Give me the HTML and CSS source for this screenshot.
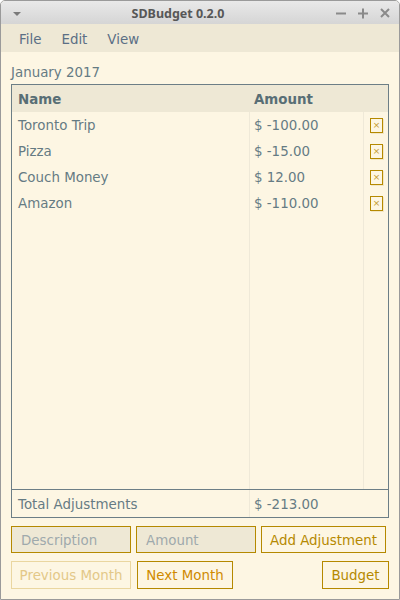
FILE: index.html
```html
<!DOCTYPE html>
<html>
<head>
<meta charset="utf-8">
<link rel="stylesheet" href="styles.css">
</head>
<body>
<div class="window">
  <div class="titlebar">
    <svg class="tb-menu" width="12" height="8" viewBox="0 0 12 8"><path d="M2 2 L10 2 L6 6 Z" fill="#7a7a7a"/></svg>
    <div class="title">SDBudget 0.2.0</div>
    <div class="tb-controls">
      <svg width="12" height="12" viewBox="0 0 12 12"><path d="M1 6.5 H11" stroke="#8a8a8a" stroke-width="2"/></svg>
      <svg width="12" height="12" viewBox="0 0 12 12"><path d="M1 6.5 H11 M6 1.5 V11.5" stroke="#8a8a8a" stroke-width="2"/></svg>
      <svg width="12" height="12" viewBox="0 0 12 12"><path d="M2 2 L10 10 M10 2 L2 10" stroke="#8a8a8a" stroke-width="2"/></svg>
    </div>
  </div>
  <div class="menubar">
    <span class="menu">File</span>
    <span class="menu">Edit</span>
    <span class="menu">View</span>
  </div>
  <div class="content">
    <div class="month">January 2017</div>
    <div class="table">
      <div class="thead">
        <div class="th c-name">Name</div>
        <div class="th c-amt">Amount</div>
        <div class="th c-del"></div>
      </div>
      <div class="tbody">
        <div class="col col-name">
          <div class="cell">Toronto Trip</div>
          <div class="cell">Pizza</div>
          <div class="cell">Couch Money</div>
          <div class="cell">Amazon</div>
        </div>
        <div class="col col-amt">
          <div class="cell">$ -100.00</div>
          <div class="cell">$ -15.00</div>
          <div class="cell">$ 12.00</div>
          <div class="cell">$ -110.00</div>
        </div>
        <div class="col col-del">
          <div class="cell"><span class="del">×</span></div>
          <div class="cell"><span class="del">×</span></div>
          <div class="cell"><span class="del">×</span></div>
          <div class="cell"><span class="del">×</span></div>
        </div>
      </div>
      <div class="tfoot">
        <div class="fcell c-name">Total Adjustments</div>
        <div class="fcell c-amt">$ -213.00</div>
        <div class="fcell c-del"></div>
      </div>
    </div>
    <div class="row row1">
      <div class="field">Description</div>
      <div class="field">Amount</div>
      <div class="btn btn-add">Add Adjustment</div>
    </div>
    <div class="row row2">
      <div class="btn btn-prev">Previous Month</div>
      <div class="btn btn-next">Next Month</div>
      <div class="spacer"></div>
      <div class="btn btn-budget">Budget</div>
    </div>
  </div>
</div>
</body>
</html>
```

FILE: styles.css
```css
* { box-sizing: border-box; }
html, body { margin: 0; padding: 0; background: #ffffff; }
body { width: 400px; height: 600px; font-family: "DejaVu Sans", sans-serif; }

.window {
  width: 400px;
  height: 600px;
  border: 1px solid #9a9a9a;
  border-radius: 5px 5px 0 0;
  overflow: hidden;
  display: flex;
  flex-direction: column;
  background: #fdf6e3;
}

.titlebar {
  height: 23px;
  background: linear-gradient(#e9e9e9, #d5d5d5);
  display: flex;
  align-items: center;
  position: relative;
  flex: none;
}
.tb-menu { position: absolute; left: 10px; top: 9px; }
.title {
  flex: 1;
  text-align: center;
  font-family: "Noto Sans", "Open Sans", sans-serif;
  font-weight: bold;
  font-size: 12.5px;
  color: #575757;
  padding-top: 2px;
  padding-right: 44px;
}
.tb-controls {
  position: absolute;
  right: 8px;
  top: 6px;
  display: flex;
  gap: 10px;
}

.menubar {
  height: 28px;
  background: #eee8d5;
  display: flex;
  align-items: center;
  padding-left: 18px;
  padding-top: 3px;
  flex: none;
}
.menu {
  font-size: 13.4px;
  color: #5b6f85;
  margin-right: 20px;
}

.content {
  flex: 1;
  display: flex;
  flex-direction: column;
  padding: 13px 10px 10px 10px;
  min-height: 0;
}

.month {
  font-size: 13.4px;
  line-height: 16px;
  color: #657b83;
  margin-bottom: 3px;
}

.table {
  flex: 1;
  border: 1px solid #6c7e86;
  display: flex;
  flex-direction: column;
  min-height: 0;
  margin-bottom: 8px;
}
.thead {
  height: 27px;
  background: #eee8d5;
  display: flex;
  align-items: center;
  padding-top: 1px;
  flex: none;
}
.th {
  font-size: 13.4px;
  font-weight: bold;
  color: #586e75;
}
.c-name { width: 237px; padding-left: 6px; }
.c-amt { width: 114px; padding-left: 5px; }
.c-del { flex: 1; }

.tbody {
  flex: 1;
  display: flex;
  min-height: 0;
}
.col { display: flex; flex-direction: column; }
.col-name { width: 237px; }
.col-amt { width: 114px; border-left: 1px solid #efe9d8; }
.col-del { flex: 1; border-left: 1px solid #efe9d8; }
.cell {
  height: 26px;
  display: flex;
  align-items: center;
  font-size: 13.4px;
  color: #657b83;
  flex: none;
}
.col-name .cell { padding-left: 6px; }
.col-amt .cell { padding-left: 4px; }
.col-del .cell { justify-content: center; padding-left: 1px; }
.del {
  width: 13px;
  height: 15px;
  border: 1px solid #b58900;
  color: #c49a2a;
  font-size: 9px;
  line-height: 10px;
  display: flex;
  align-items: center;
  justify-content: center;
  box-shadow: 1px 1px 0 #f3e6c2;
}

.tfoot {
  height: 28px;
  border-top: 1px solid #6c7e86;
  display: flex;
  align-items: center;
  flex: none;
}
.fcell {
  font-size: 13.4px;
  color: #657b83;
  height: 100%;
  display: flex;
  align-items: center;
  padding-top: 1px;
}
.tfoot .c-amt { border-left: 1px solid #efe9d8; padding-left: 4px; }

.row { display: flex; flex: none; }
.row1 { height: 27px; gap: 5px; margin-bottom: 8px; }
.row2 { height: 28px; gap: 6px; }
.spacer { flex: 1; }

.field {
  width: 120px;
  background: #eee8d5;
  border: 1px solid #b58900;
  color: #9ea9ac;
  font-size: 13.4px;
  display: flex;
  align-items: center;
  padding-left: 9px;
  padding-top: 1px;
}
.btn {
  border: 1px solid #b58900;
  color: #b58900;
  font-size: 13.4px;
  display: flex;
  align-items: center;
  justify-content: center;
  padding-top: 1px;
}
.btn-add { width: 125px; }
.btn-prev { width: 120px; border-color: #ead6a0; color: #e3c888; }
.btn-next { width: 96px; color: #cf8a00; }
.btn-budget { width: 67px; }
```
